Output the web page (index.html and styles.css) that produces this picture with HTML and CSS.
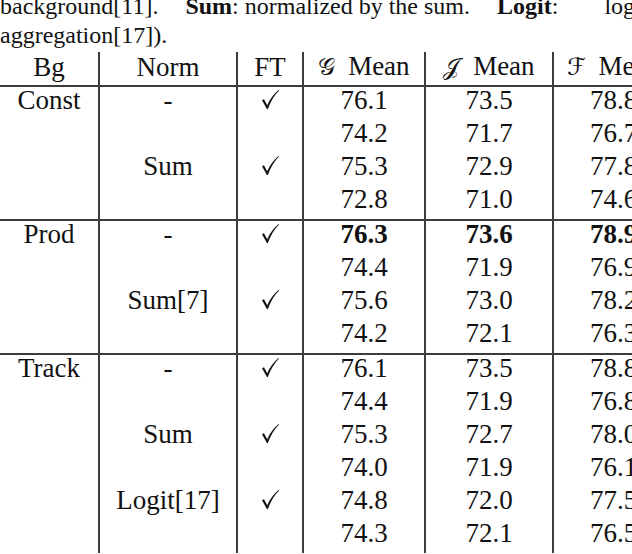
FILE: index.html
```html
<!DOCTYPE html>
<html>
<head>
<meta charset="utf-8">
<link rel="stylesheet" href="styles.css">
</head>
<body>
<div class="page">
  <div class="caption">
    <div class="cap-line">background[11]. <span class="sent"><b>Sum</b>:</span> normalized by the sum. <span class="sent"><b>Logit</b>:</span> <span class="cont">logit</span></div>
    <div class="cap-line">aggregation[17]).</div>
  </div>
  <table class="results">
    <colgroup>
      <col class="c-bg"><col class="c-norm"><col class="c-ft"><col class="c-g"><col class="c-j"><col class="c-f">
    </colgroup>
    <thead>
      <tr><th>Bg</th><th>Norm</th><th>FT</th><th><span class="cal">𝒢</span> Mean</th><th><span class="cal">𝒥</span> Mean</th><th><span class="cal">ℱ</span> Mean</th></tr>
    </thead>
    <tbody>
      <tr><td>Const</td><td>-</td><td><svg class="check" viewBox="0 0 17 19"><path d="M0 10.2 L2 9.2 L5.2 15.2 C8.3 8.6 12 3.6 16.6 0 L17 0.8 C12.8 4.6 9.2 10.4 5.9 19 L4.9 19 Z"/></svg></td><td>76.1</td><td>73.5</td><td>78.8</td></tr>
      <tr><td></td><td></td><td></td><td>74.2</td><td>71.7</td><td>76.7</td></tr>
      <tr><td></td><td>Sum</td><td><svg class="check" viewBox="0 0 17 19"><path d="M0 10.2 L2 9.2 L5.2 15.2 C8.3 8.6 12 3.6 16.6 0 L17 0.8 C12.8 4.6 9.2 10.4 5.9 19 L4.9 19 Z"/></svg></td><td>75.3</td><td>72.9</td><td>77.8</td></tr>
      <tr><td></td><td></td><td></td><td>72.8</td><td>71.0</td><td>74.6</td></tr>
    </tbody>
    <tbody>
      <tr><td>Prod</td><td>-</td><td><svg class="check" viewBox="0 0 17 19"><path d="M0 10.2 L2 9.2 L5.2 15.2 C8.3 8.6 12 3.6 16.6 0 L17 0.8 C12.8 4.6 9.2 10.4 5.9 19 L4.9 19 Z"/></svg></td><td class="best">76.3</td><td class="best">73.6</td><td class="best">78.9</td></tr>
      <tr><td></td><td></td><td></td><td>74.4</td><td>71.9</td><td>76.9</td></tr>
      <tr><td></td><td>Sum[7]</td><td><svg class="check" viewBox="0 0 17 19"><path d="M0 10.2 L2 9.2 L5.2 15.2 C8.3 8.6 12 3.6 16.6 0 L17 0.8 C12.8 4.6 9.2 10.4 5.9 19 L4.9 19 Z"/></svg></td><td>75.6</td><td>73.0</td><td>78.2</td></tr>
      <tr><td></td><td></td><td></td><td>74.2</td><td>72.1</td><td>76.3</td></tr>
    </tbody>
    <tbody>
      <tr><td>Track</td><td>-</td><td><svg class="check" viewBox="0 0 17 19"><path d="M0 10.2 L2 9.2 L5.2 15.2 C8.3 8.6 12 3.6 16.6 0 L17 0.8 C12.8 4.6 9.2 10.4 5.9 19 L4.9 19 Z"/></svg></td><td>76.1</td><td>73.5</td><td>78.8</td></tr>
      <tr><td></td><td></td><td></td><td>74.4</td><td>71.9</td><td>76.8</td></tr>
      <tr><td></td><td>Sum</td><td><svg class="check" viewBox="0 0 17 19"><path d="M0 10.2 L2 9.2 L5.2 15.2 C8.3 8.6 12 3.6 16.6 0 L17 0.8 C12.8 4.6 9.2 10.4 5.9 19 L4.9 19 Z"/></svg></td><td>75.3</td><td>72.7</td><td>78.0</td></tr>
      <tr><td></td><td></td><td></td><td>74.0</td><td>71.9</td><td>76.1</td></tr>
      <tr><td></td><td>Logit[17]</td><td><svg class="check" viewBox="0 0 17 19"><path d="M0 10.2 L2 9.2 L5.2 15.2 C8.3 8.6 12 3.6 16.6 0 L17 0.8 C12.8 4.6 9.2 10.4 5.9 19 L4.9 19 Z"/></svg></td><td>74.8</td><td>72.0</td><td>77.5</td></tr>
      <tr><td></td><td></td><td></td><td>74.3</td><td>72.1</td><td>76.5</td></tr>
    </tbody>
  </table>
</div>
</body>
</html>
```

FILE: styles.css
```css
html, body {
  margin: 0;
  padding: 0;
  background: #ffffff;
  overflow: hidden;
}

.page {
  width: 632px;
  height: 554px;
  overflow: hidden;
  font-family: "Liberation Serif", "Times New Roman", serif;
  color: #111111;
}

.caption {
  margin: -8px 0 2px 0;
  font-size: 24px;
  line-height: 29px;
}

.cap-line {
  white-space: nowrap;
}

.caption b {
  font-weight: bold;
}

.sent {
  margin-left: 21px;
}

.cont {
  margin-left: 40px;
}

.results {
  border-collapse: collapse;
  table-layout: fixed;
  width: 673px;
  font-size: 27px;
}

.c-bg { width: 99px; }
.c-norm { width: 138px; }
.c-ft { width: 66px; }
.c-g { width: 122px; }
.c-j { width: 128px; }
.c-f { width: 120px; }

.results th {
  font-weight: normal;
  line-height: 28px;
  padding: 0 0 4px 0;
  text-align: center;
  white-space: nowrap;
}

.results td {
  line-height: 26px;
  height: 26px;
  padding: 0 0 7px 0;
  text-align: center;
  white-space: nowrap;
}

.results th + th,
.results td + td {
  border-left: 2px solid #3c3c3c;
}

.results thead {
  border-bottom: 2px solid #3c3c3c;
}

.results tbody + tbody {
  border-top: 2px solid #3c3c3c;
}

.best {
  font-weight: bold;
}

.cal {
  font-family: "DejaVu Serif", "DejaVu Sans", serif;
  font-size: 24px;
  margin-right: 6px;
}

.check {
  width: 17px;
  height: 19px;
  vertical-align: baseline;
  fill: #111111;
}
```
